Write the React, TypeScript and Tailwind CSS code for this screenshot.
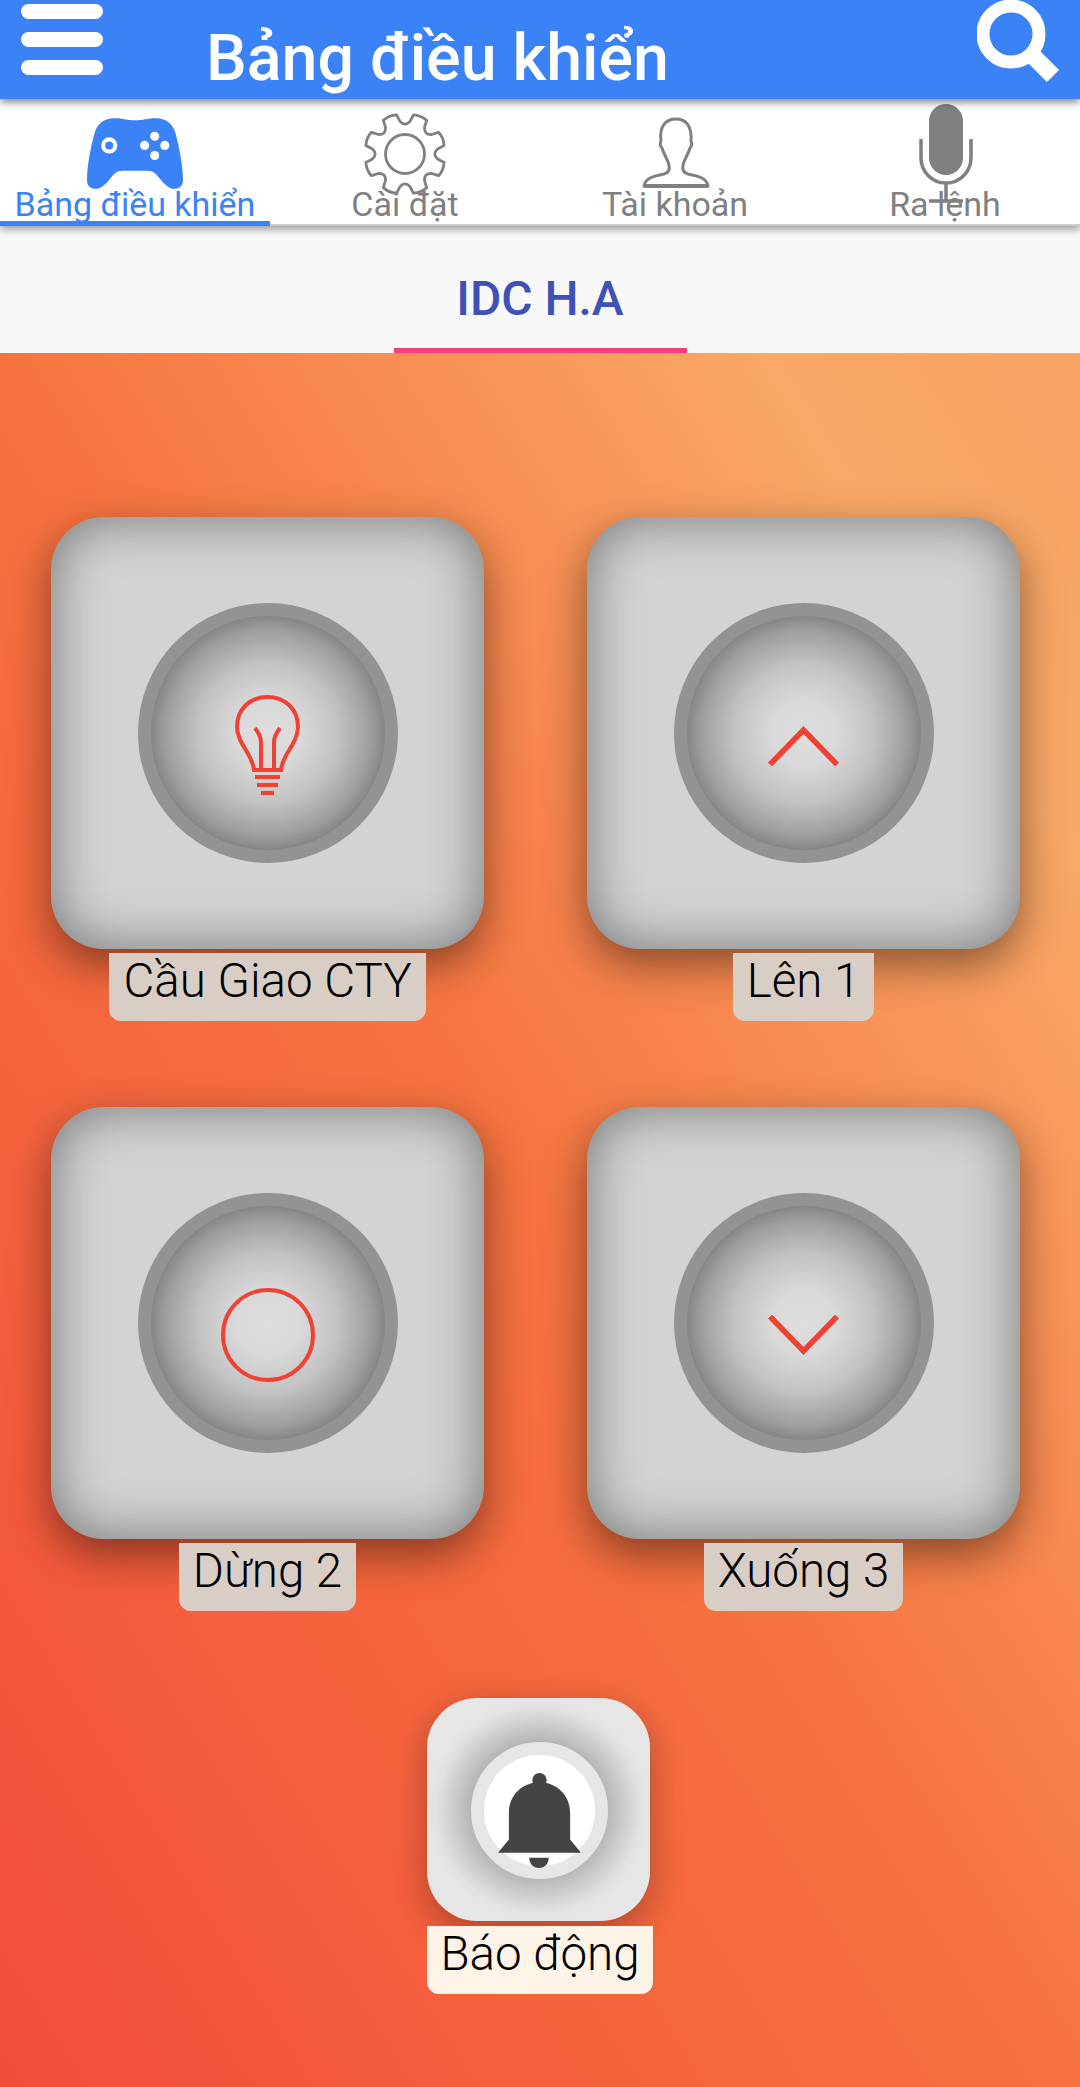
import { ReactNode } from 'react';

const gearPath = () => {
  // 8 rounded teeth with scooped notches between them
  const cx = 43;
  const cy = 43;
  const pts: string[] = [];
  for (let i = 0; i < 8; i++) {
    const a = (i * Math.PI) / 4 - Math.PI / 2 + Math.PI / 8;
    const w = 0.21;
    const p = (r: number, t: number) => `${(cx + r * Math.cos(t)).toFixed(1)} ${(cy + r * Math.sin(t)).toFixed(1)}`;
    pts.push(`${i === 0 ? 'M' : 'L'} ${p(33, a - w - 0.03)}`);
    pts.push(`L ${p(40, a - w + 0.03)}`);
    pts.push(`Q ${p(42, a)} ${p(40, a + w - 0.03)}`);
    pts.push(`L ${p(33, a + w + 0.03)}`);
    const next = a + Math.PI / 4;
    pts.push(`Q ${p(27, a + Math.PI / 8)} ${p(33, next - w - 0.03)}`);
  }
  return pts.join(' ') + ' Z';
};

function Gamepad() {
  return (
    <svg width="96" height="72" viewBox="0 0 95 71" className="mt-[1px]">
      <path fill="#3b82f6" d="M27 1C35 1 40 3 47.5 3C55 3 60 1 68 1C78 1 84 6 87 14C91 28 95 48 95 62C95 68 92 71 86 71C82 71 78 68 73 62C68 56 66 53 60 53L35 53C29 53 27 56 22 62C17 68 13 71 9 71C3 71 0 68 0 62C0 48 4 28 8 14C11 6 17 1 27 1Z" />
      <circle cx="22" cy="28" r="6" fill="#3b82f6" stroke="#fff" strokeWidth="4" />
      <circle cx="67" cy="19" r="4.5" fill="#fff" />
      <circle cx="57" cy="28" r="4.5" fill="#fff" />
      <circle cx="77" cy="28" r="4.5" fill="#fff" />
      <circle cx="67" cy="38" r="4.5" fill="#fff" />
    </svg>
  );
}

function Gear() {
  return (
    <svg width="86" height="86" viewBox="0 0 86 86" className="mt-[-5px]" fill="none" stroke="#808080" strokeWidth="2.8">
      <path d={gearPath()} strokeLinejoin="round" />
      <circle cx="43" cy="43" r="19.5" />
    </svg>
  );
}

function Person() {
  return (
    <svg width="68" height="71" viewBox="0 0 68 71" className="mt-[1px] ml-[2px]" fill="none" stroke="#808080" strokeWidth="3">
      <path d="M2 69C3 61 12 59 22 57C26 56 28 53 27 48C26 43 22 38 20 31C18 29 18 26 19 24C17 9 24 2 34 2C44 2 50 9 49 24C50 26 50 29 48 31C46 38 42 43 41 48C40 53 42 56 46 57C56 59 65 61 66 69Z" strokeLinejoin="round" />
      <path d="M2 69H66" strokeWidth="4" />
    </svg>
  );
}

function Mic() {
  return (
    <svg width="54" height="100" viewBox="0 0 54 100" className="mt-[-12px] ml-[2px]" fill="none" stroke="#808080" strokeWidth="3.5">
      <rect x="10" y="0" width="34" height="71" rx="17" fill="#808080" stroke="none" />
      <path d="M2 35V54A25 25 0 0 0 52 54V35" />
      <path d="M27 79V98M10 97H44" />
    </svg>
  );
}

function Bulb() {
  return (
    <svg width="65" height="101" viewBox="0 0 65 101" fill="none" stroke="#ef4234" strokeWidth="4">
      <path d="M19 75C18 60 2 48 2 32C2 14 15 2 32.5 2C50 2 63 14 63 32C63 48 47 60 46 75H19Z" />
      <path d="M20 33C23 37 26 41 26 47V75M45 33C42 37 39 41 39 47V75" />
      <path d="M20 82H45M22 90H43M26 98H39" />
    </svg>
  );
}

function ChevronUp() {
  return (
    <svg width="71" height="41" viewBox="0 0 71 41" fill="none" stroke="#ef4234" strokeWidth="5.5">
      <path d="M2 39.5L35.5 5L69 39.5" />
    </svg>
  );
}

function ChevronDown() {
  return (
    <svg width="71" height="41" viewBox="0 0 71 41" fill="none" stroke="#ef4234" strokeWidth="5.5">
      <path d="M2 1.5L35.5 36L69 1.5" />
    </svg>
  );
}

function CircleIcon() {
  return <div className="w-[94px] h-[94px] rounded-full border-4 border-[#ef4234]" />;
}

function Bell() {
  return (
    <svg width="83" height="96" viewBox="0 0 80 94" fill="#444444">
      <circle cx="40" cy="8" r="7" />
      <path d="M0 79C0 78 1 77 2 76L10 66V40C10 22 24 10 40 10C56 10 70 22 70 40V66L78 76C79 77 80 78 80 79Z" />
      <path d="M30 84H49C49 90 45 94 39.5 94C34 94 30 90 30 84Z" />
    </svg>
  );
}

function Control({ label, children }: { label: string; children: ReactNode }) {
  return (
    <div className="flex flex-col items-center">
      <div className="w-[433px] h-[432px] rounded-[53px] bg-[#d3d3d3] flex items-center justify-center shadow-[inset_0_0_55px_rgba(0,0,0,0.45),0_16px_44px_rgba(0,0,0,0.45)]">
        <div className="w-[260px] h-[260px] rounded-full border-[13px] border-[#939393] bg-[radial-gradient(circle_closest-side,#dedede_0%,#d9d9d9_28%,#c2c2c2_60%,#9e9e9e_88%,#858585_100%)] flex items-center justify-center pt-6">
          {children}
        </div>
      </div>
      <div className="mt-1 h-[68px] px-[14px] rounded-b-xl bg-[#d9cec5] text-[47.5px] leading-[56px] font-light text-black whitespace-nowrap">
        {label}
      </div>
    </div>
  );
}

const tabs = [
  { label: 'Bảng điều khiển', icon: <Gamepad />, active: true },
  { label: 'Cài đặt', icon: <Gear /> },
  { label: 'Tài khoản', icon: <Person /> },
  { label: 'Ra lệnh', icon: <Mic /> },
];

export default function App() {
  return (
    <div className="w-[1080px] h-[2087px] overflow-hidden flex flex-col font-['Roboto',sans-serif] bg-white">
      {/* Header */}
      <header className="relative z-30 h-[99px] shrink-0 bg-[#3b82f6] flex items-start shadow-[0_3px_8px_rgba(0,0,0,0.5)]">
        <div className="ml-[21px] mt-1 w-[82px] flex flex-col gap-[13px]">
          <span className="h-[15px] rounded-full bg-white" />
          <span className="h-[15px] rounded-full bg-white" />
          <span className="h-[15px] rounded-full bg-white" />
        </div>
        <h1 className="ml-[103px] mt-[18px] text-[64.5px] leading-[80px] font-medium text-white whitespace-nowrap">Bảng điều khiển</h1>
        <svg width="84" height="84" viewBox="0 0 84 84" className="ml-auto mr-[19px]" fill="none" stroke="#fff">
          <circle cx="34" cy="34" r="28" strokeWidth="13" />
          <path d="M53 53L76 76" strokeWidth="17" />
        </svg>
      </header>

      {/* Tabs */}
      <nav className="relative z-20 h-[127px] shrink-0 bg-white grid grid-cols-4 border-b-[2px] border-[#cccccc] shadow-[0_3px_8px_rgba(0,0,0,0.4)]">
        {tabs.map((t) => (
          <div key={t.label} className={`relative flex flex-col items-center ${t.active ? 'text-[#3b82f6]' : 'text-[#808080]'}`}>
            <div className="h-[87px] w-full flex justify-center items-end">
              <div className="h-[70px] flex items-start justify-center">{t.icon}</div>
            </div>
            <span className="relative text-[34px] leading-[36px] whitespace-nowrap">{t.label}</span>
            {t.active && <div className="absolute left-0 right-0 bottom-[-2px] h-[5px] bg-[#3b82f6]" />}
          </div>
        ))}
      </nav>

      {/* Device group tab */}
      <div className="relative z-10 h-[127px] shrink-0 bg-[#f8f8f8] flex justify-center">
        <div className="w-[293px] h-full pt-[23px] flex items-center justify-center border-b-[5px] border-[#f5407a] text-[48px] font-medium text-[#3f51b5]">
          IDC H.A
        </div>
      </div>

      {/* Controls */}
      <main className="flex-1 pt-[164px] bg-[linear-gradient(to_top_right,#f24d3a_0%,#f6733f_50%,#f9a866_85%,#f9a565_100%)]">
        <div className="grid grid-cols-[433px_433px] gap-x-[103px] gap-y-[86px] pl-[51px]">
          <Control label="Cầu Giao CTY"><Bulb /></Control>
          <Control label="Lên 1"><ChevronUp /></Control>
          <Control label="Dừng 2"><CircleIcon /></Control>
          <Control label="Xuống 3"><ChevronDown /></Control>
        </div>

        <div className="mt-[87px] ml-[427px] w-[226px] flex flex-col items-start">
          <div className="w-[223px] h-[223px] rounded-[50px] flex items-center justify-center bg-[radial-gradient(circle_closest-side,#b4b4b4_60%,#c6c6c6_72%,#e2e2e2_92%,#e6e6e6_100%)] shadow-[0_10px_34px_rgba(0,0,0,0.3)]">
            <div className="ml-[1px] mt-[1px] w-[137px] h-[137px] rounded-full border-[13px] border-[#e6e6e6] bg-white flex items-center justify-center pt-5">
              <Bell />
            </div>
          </div>
          <div className="mt-[5px] h-[68px] w-[226px] text-center rounded-b-xl bg-[#fdf3e7] text-[47.5px] leading-[56px] font-light text-black whitespace-nowrap">
            Báo động
          </div>
        </div>
      </main>
    </div>
  );
}
